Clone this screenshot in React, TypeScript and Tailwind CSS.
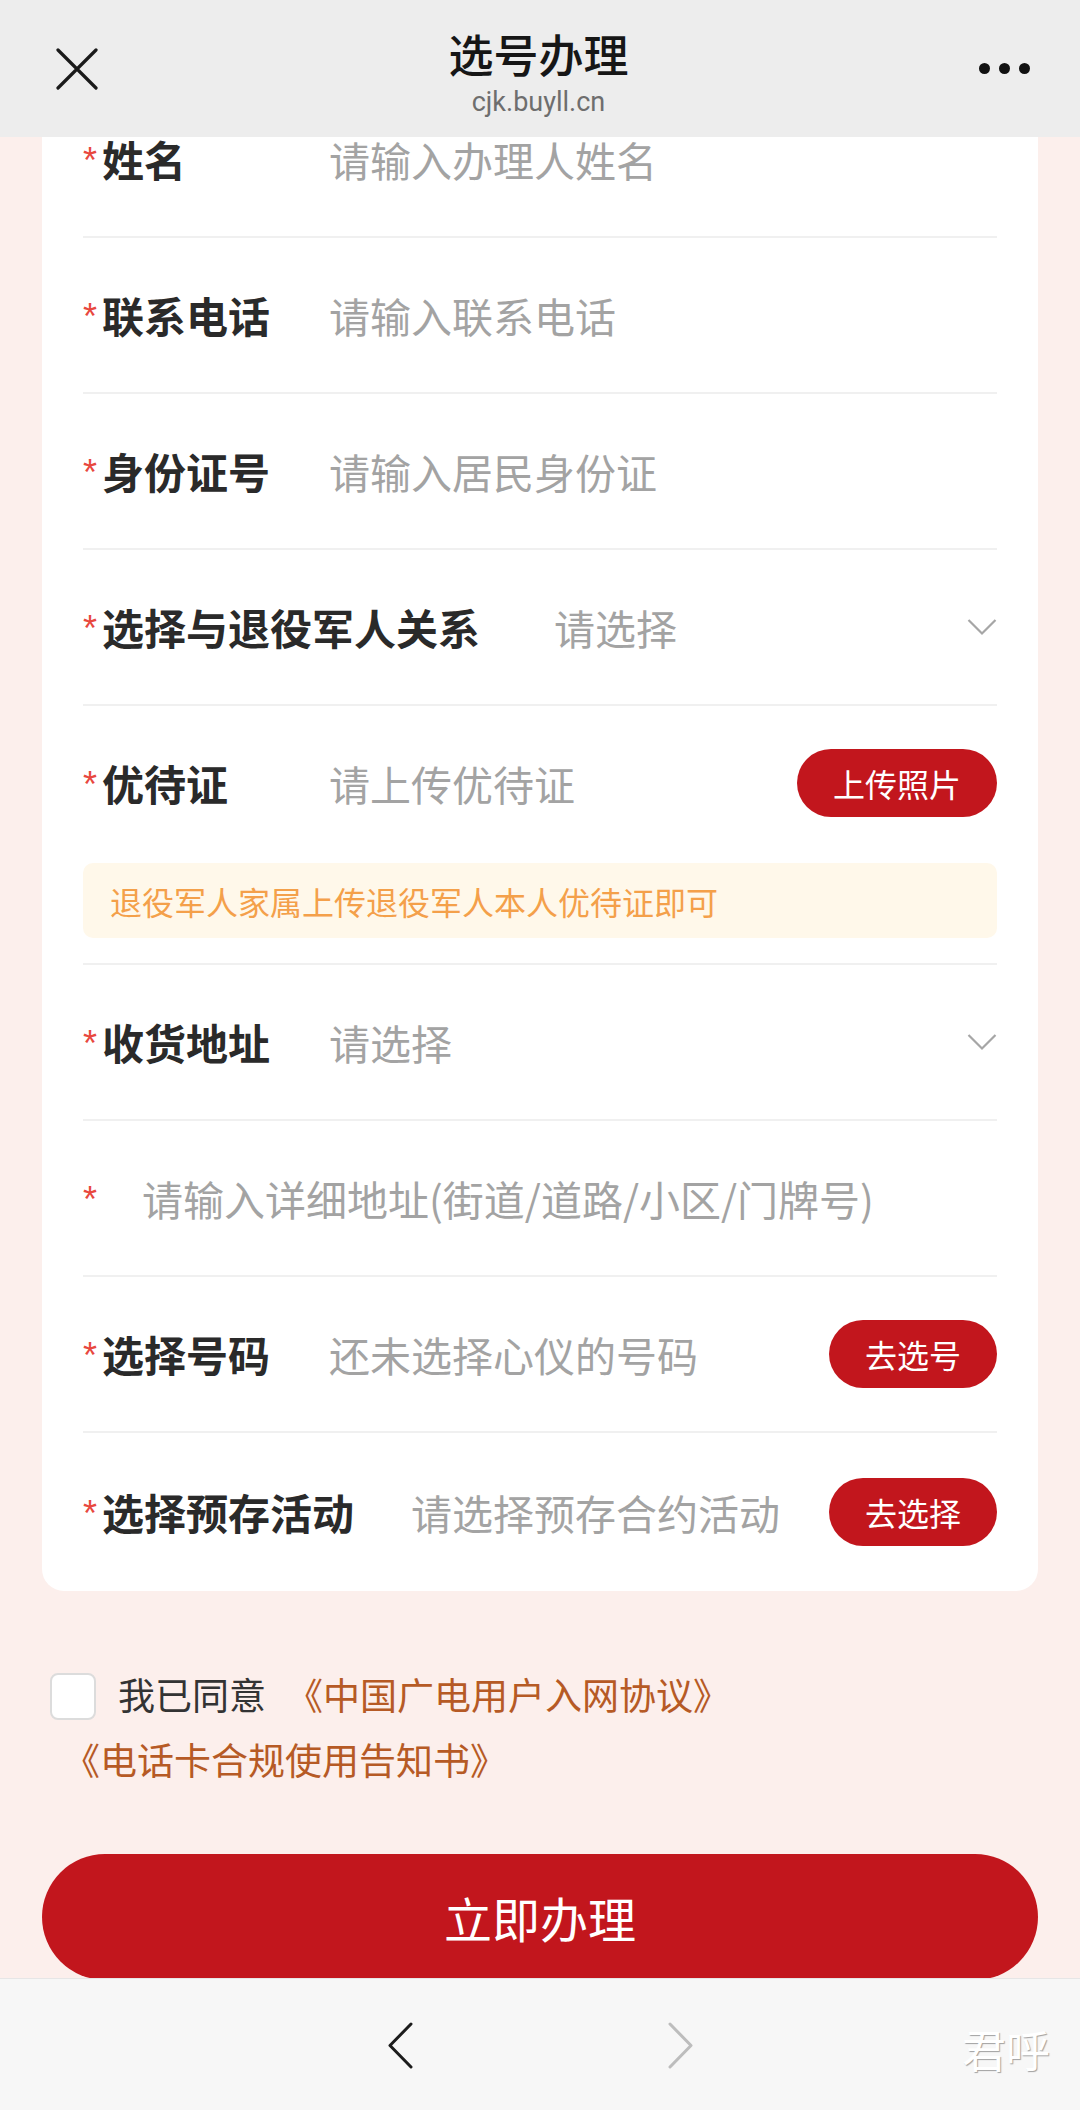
import React from 'react';

const Star: React.FC = () => (
  <span className="mr-[5px] self-start mt-[4px] text-[36px] leading-[40px] text-[#e8483e] font-['Liberation_Sans',sans-serif]">*</span>
);

const Chevron: React.FC = () => (
  <svg className="w-[30px] h-[18px] shrink-0" viewBox="0 0 30 18" fill="none" stroke="#a6a6a6" strokeWidth={2.2}>
    <path d="M1.5 2 L15 15.5 L28.5 2" />
  </svg>
);

const RedBtn: React.FC<{ text: string }> = ({ text }) => (
  <button className="h-[68px] px-[36px] rounded-full bg-[#c2161d] text-white text-[32px] leading-none shrink-0">{text}</button>
);

type RowProps = {
  label?: string;
  placeholder: string;
  labelW?: string;
  right?: React.ReactNode;
  border?: boolean;
  h?: string;
};

const Row: React.FC<RowProps> = ({ label, placeholder, labelW = 'w-[246px]', right, border = true, h = 'h-[156px]' }) => (
  <div className={`flex items-center ${h} ${border ? 'border-b-2 border-[#f0f0f0]' : ''}`}>
    <div className={`flex items-center shrink-0 ${labelW}`}>
      <Star />
      {label && <span className="text-[42px] leading-[42px] font-bold text-[#2a2a2a]">{label}</span>}
    </div>
    <span className="flex-1 text-[41px] leading-[42px] text-[#a3a3a3] whitespace-nowrap">{placeholder}</span>
    {right}
  </div>
);

export default function App() {
  return (
    <div className="relative min-h-[2110px] bg-[#fcefec] font-['Noto_Sans_CJK_SC','Noto_Sans',sans-serif] overflow-hidden">
      {/* top nav bar, sits over the scrolled form */}
      <header className="absolute top-0 left-0 right-0 z-10 h-[137px] bg-[#ededed] flex items-center justify-between px-[56px]">
        <svg className="w-[42px] h-[42px]" viewBox="0 0 42 42" fill="none" stroke="#1a1a1a" strokeWidth={3.2} strokeLinecap="round">
          <path d="M2 2 L40 40 M40 2 L2 40" />
        </svg>
        <div className="flex flex-col items-center">
          <span className="text-[45px] leading-[52px] font-medium text-[#161616] mt-[8px]">选号办理</span>
          <span className="text-[27px] leading-[32px] text-[#6e6e6e] font-['Roboto',sans-serif] mt-[6px]">cjk.buyll.cn</span>
        </div>
        <div className="flex items-center gap-[9px] mr-[-6px]">
          <span className="w-[11px] h-[11px] rounded-full bg-[#111]" />
          <span className="w-[11px] h-[11px] rounded-full bg-[#111]" />
          <span className="w-[11px] h-[11px] rounded-full bg-[#111]" />
        </div>
      </header>

      <main className="pt-[61px]">
        <div className="mx-[42px] bg-white rounded-[22px] px-[41px] pt-[21px]">
          <Row label="姓名" placeholder="请输入办理人姓名" />
          <Row label="联系电话" placeholder="请输入联系电话" />
          <Row label="身份证号" placeholder="请输入居民身份证" />
          <Row label="选择与退役军人关系" placeholder="请选择" labelW="w-[471px]" right={<Chevron />} />
          <div className="border-b-2 border-[#f0f0f0]">
            <Row label="优待证" placeholder="请上传优待证" right={<RedBtn text="上传照片" />} border={false} h="h-[154px]" />
            <div className="mt-[3px] mb-[25px] h-[75px] rounded-[10px] bg-[#fff8ea] flex items-center pl-[27px] text-[32px] text-[#f4a04a]">
              退役军人家属上传退役军人本人优待证即可
            </div>
          </div>
          <Row label="收货地址" placeholder="请选择" right={<Chevron />} />
          <Row placeholder="请输入详细地址(街道/道路/小区/门牌号)" labelW="w-[59px]" />
          <Row label="选择号码" placeholder="还未选择心仪的号码" right={<RedBtn text="去选号" />} />
          <Row label="选择预存活动" placeholder="请选择预存合约活动" labelW="w-[328px]" right={<RedBtn text="去选择" />} border={false} h="h-[158px]" />
        </div>

        <p className="mt-[71px] pl-[50px] pr-[40px] text-[37px] leading-[65px] text-[#333]">
          <span className="inline-block align-middle w-[46px] h-[47px] rounded-[8px] border-2 border-[#dcdcdc] bg-white mr-[22px] -mt-[6px]" />
          我已同意
          <span className="inline-block whitespace-nowrap ml-[20px] text-[#b65a25]">《中国广电用户入网协议》</span>
          <br />
          <span className="inline-block whitespace-nowrap ml-[13px] text-[#b65a25]">《电话卡合规使用告知书》</span>
        </p>

        <div className="mt-[62px] mx-[42px]">
          <button className="w-full h-[126px] rounded-full bg-[#c2161d] text-white text-[48px]">立即办理</button>
        </div>
      </main>

      {/* browser bottom toolbar */}
      <footer className="absolute bottom-0 left-0 right-0 z-10 h-[132px] bg-[#f7f7f7] border-t border-[#e6e6e6] flex items-center">
        <div className="flex-1 flex justify-center items-center gap-[253px] mt-[2px]">
          <svg className="w-[27px] h-[47px]" viewBox="0 0 27 47" fill="none" stroke="#1c1c1c" strokeWidth={3} strokeLinecap="round" strokeLinejoin="round">
            <path d="M24 2 L3 23.5 L24 45" />
          </svg>
          <svg className="w-[27px] h-[47px]" viewBox="0 0 27 47" fill="none" stroke="#bdbdbd" strokeWidth={3} strokeLinecap="round" strokeLinejoin="round">
            <path d="M3 2 L24 23.5 L3 45" />
          </svg>
        </div>
        <span className="absolute right-[30px] top-[48px] text-[44px] leading-[44px] text-white [text-shadow:1px_1px_1px_rgba(0,0,0,0.35)]">君呼</span>
      </footer>
    </div>
  );
}
